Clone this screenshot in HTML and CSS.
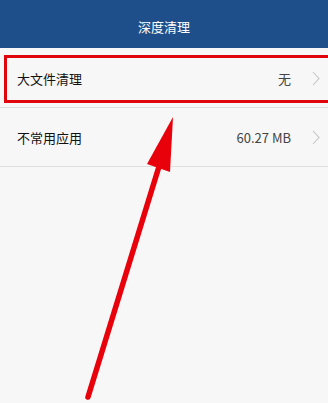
FILE: index.html
```html
<!DOCTYPE html>
<html lang="zh-CN">
<head>
    <meta charset="UTF-8">
    <meta name="viewport" content="width=device-width, initial-scale=1.0">
    <title>深度清理</title>
    <link rel="stylesheet" href="styles.css">
</head>
<body>
    <div class="screen">
        <div class="topbar">深度清理</div>
        <div class="list">
            <div class="row">
                <span class="label">大文件清理</span>
                <span class="value">无</span>
                <svg class="chev" width="8" height="15" viewBox="0 0 8 15"><path d="M1 1 L7 7.5 L1 14" fill="none" stroke="#c4c4c4" stroke-width="1.1"/></svg>
            </div>
            <div class="row">
                <span class="label">不常用应用</span>
                <span class="value">60.27 MB</span>
                <svg class="chev" width="8" height="15" viewBox="0 0 8 15"><path d="M1 1 L7 7.5 L1 14" fill="none" stroke="#c4c4c4" stroke-width="1.1"/></svg>
            </div>
        </div>

        <!-- annotations -->
        <div class="mark-box"></div>
        <svg class="mark-arrow" width="328" height="403" viewBox="0 0 328 403">
            <line x1="88" y1="397" x2="161" y2="160" stroke="#e8000b" stroke-width="5.5" stroke-linecap="round"/>
            <polygon points="173,117 147,164 170,172" fill="#e8000b"/>
        </svg>
    </div>
</body>
</html>
```

FILE: styles.css
```css
* { box-sizing: border-box; }
body {
    margin: 0;
    font-family: "Noto Sans CJK SC", "Noto Sans", Roboto, sans-serif;
    background: #f7f7f7;
}
.screen {
    position: relative;
    width: 328px;
    height: 403px;
    overflow: hidden;
    background: #f7f7f7;
}
.topbar {
    height: 48px;
    background: #1f4f8b;
    color: #fff;
    font-size: 13px;
    display: flex;
    align-items: center;
    justify-content: center;
    padding-top: 4px;
}
.list { padding-top: 1px; }
.row {
    height: 59px;
    display: flex;
    align-items: center;
    padding: 0 8px 0 17px;
    border-bottom: 1px solid #dedede;
}
.label { flex: 1; font-size: 13px; color: #111; }
.value { font-size: 13px; color: #444; margin-right: 21px; }
.chev { display: block; }
.mark-box {
    position: absolute;
    left: 4px;
    top: 55px;
    width: 330px;
    height: 48px;
    border: 3px solid #e0040c;
}
.mark-arrow { position: absolute; left: 0; top: 0; }
```
